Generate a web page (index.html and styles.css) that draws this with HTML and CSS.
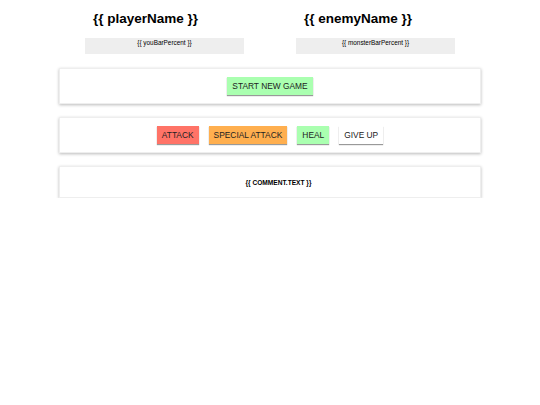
FILE: index.html
```html
<!DOCTYPE html>
<html lang="en">
<head>
    <meta charset="UTF-8">
    <meta name="viewport" content="width=device-width, initial-scale=1.0">
    <title>Monster Slayer</title>
    <link rel="stylesheet" href="styles.css">
</head>
<body>
    <div id="app">
        <div class="players">
            <div class="player">
                <h1>{{ playerName }}</h1>
                <div class="healthbar">{{ youBarPercent }}</div>
            </div>
            <div class="player">
                <h1>{{ enemyName }}</h1>
                <div class="healthbar">{{ monsterBarPercent }}</div>
            </div>
        </div>

        <section class="controls">
            <button class="start">START NEW GAME</button>
        </section>

        <section class="controls">
            <button class="attack">ATTACK</button>
            <button class="special">SPECIAL ATTACK</button>
            <button class="heal">HEAL</button>
            <button class="giveup">GIVE UP</button>
        </section>

        <section class="log">
            <ul>
                <li>{{ COMMENT.TEXT }}</li>
            </ul>
        </section>
    </div>
</body>
</html>
```

FILE: styles.css
```css
body {
    margin: 0;
    font-family: "Liberation Sans", Arial, sans-serif;
    background-color: white;
    color: #000;
}
#app {
    width: 422px;
    margin: 0 auto;
}
.players {
    display: flex;
}
.player {
    flex: 1;
}
h1 {
    margin: 10px 0 0 34px;
    font-size: 13.5px;
    line-height: 18px;
    font-weight: bold;
}
.healthbar {
    width: 159px;
    height: 16px;
    margin: 10px 0 0 26px;
    background-color: #eee;
    font-size: 6.4px;
    line-height: 10px;
    text-align: center;
}
section {
    margin-top: 14px;
    box-shadow: 0 1px 3px #bbb;
    border: 1px solid #eee;
}
.controls {
    display: flex;
    justify-content: center;
    gap: 10px;
    padding: 8px 0;
}
.controls + .controls {
    margin-top: 13px;
}
button {
    height: 18px;
    padding: 0 5px;
    border: none;
    font-family: "Liberation Sans", Arial, sans-serif;
    font-size: 8.4px;
    color: #222;
    box-shadow: 0 1px 1px #999;
    cursor: pointer;
}
.start, .heal {
    background-color: #aaffb0;
}
.attack {
    background-color: #ff7367;
}
.special {
    background-color: #ffaf4f;
}
.giveup {
    background-color: white;
}
.log {
    margin-top: 13px;
    height: 30px;
    display: flex;
    align-items: center;
    justify-content: center;
}
.log ul {
    margin: 0;
    padding: 0 0 0 17px;
    list-style: none;
}
.log li {
    font-size: 6.6px;
    font-weight: bold;
}
```
